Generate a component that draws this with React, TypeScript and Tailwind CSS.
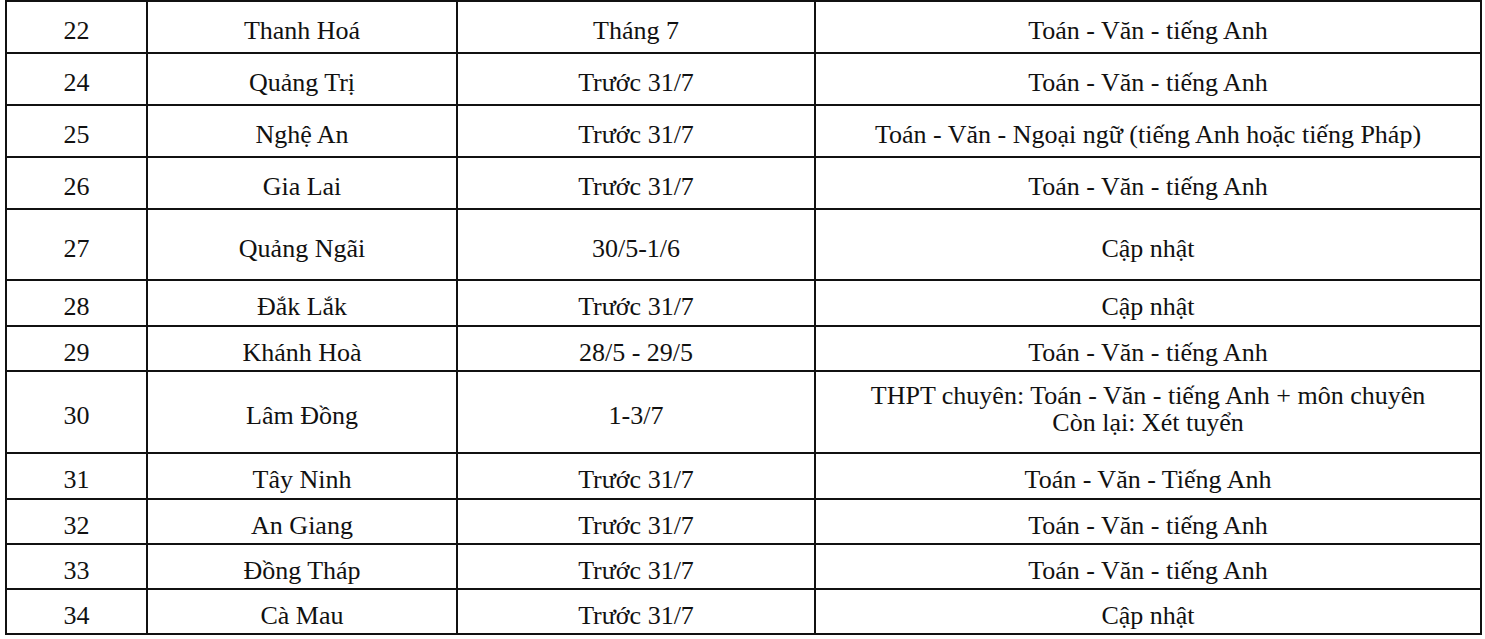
const rows: { no: string; name: string; time: string; subjects: string[]; h: string }[] = [
  { no: "22", name: "Thanh Hoá", time: "Tháng 7", subjects: ["Toán - Văn - tiếng Anh"], h: "h-[52px]" },
  { no: "24", name: "Quảng Trị", time: "Trước 31/7", subjects: ["Toán - Văn - tiếng Anh"], h: "h-[52px]" },
  { no: "25", name: "Nghệ An", time: "Trước 31/7", subjects: ["Toán - Văn - Ngoại ngữ (tiếng Anh hoặc tiếng Pháp)"], h: "h-[52px]" },
  { no: "26", name: "Gia Lai", time: "Trước 31/7", subjects: ["Toán - Văn - tiếng Anh"], h: "h-[52px]" },
  { no: "27", name: "Quảng Ngãi", time: "30/5-1/6", subjects: ["Cập nhật"], h: "h-[71px]" },
  { no: "28", name: "Đắk Lắk", time: "Trước 31/7", subjects: ["Cập nhật"], h: "h-[46px]" },
  { no: "29", name: "Khánh Hoà", time: "28/5 - 29/5", subjects: ["Toán - Văn - tiếng Anh"], h: "h-[45px]" },
  {
    no: "30",
    name: "Lâm Đồng",
    time: "1-3/7",
    subjects: ["THPT chuyên: Toán - Văn - tiếng Anh + môn chuyên", "Còn lại: Xét tuyển"],
    h: "h-[82px]",
  },
  { no: "31", name: "Tây Ninh", time: "Trước 31/7", subjects: ["Toán - Văn - Tiếng Anh"], h: "h-[46px]" },
  { no: "32", name: "An Giang", time: "Trước 31/7", subjects: ["Toán - Văn - tiếng Anh"], h: "h-[45px]" },
  { no: "33", name: "Đồng Tháp", time: "Trước 31/7", subjects: ["Toán - Văn - tiếng Anh"], h: "h-[45px]" },
  { no: "34", name: "Cà Mau", time: "Trước 31/7", subjects: ["Cập nhật"], h: "h-[43px]" },
];

export default function App() {
  return (
    <div className="h-[639px] w-[1485px] bg-white pl-[5px] [font-family:'Liberation_Serif','Times_New_Roman',serif] text-[26px] leading-[28px] text-[#111]">
      <div className="flex w-[1477px] flex-col border-2 border-[#111]">
        {rows.map((r, i) => (
          <div
            key={r.no}
            className={`flex ${r.h} ${i < rows.length - 1 ? "border-b-2 border-[#111]" : ""}`}
          >
            <div className="flex w-[141px] shrink-0 items-center justify-center border-r-2 border-[#111] pt-[8px]">
              {r.no}
            </div>
            <div className="flex w-[310px] shrink-0 items-center justify-center border-r-2 border-[#111] pt-[8px]">
              {r.name}
            </div>
            <div className="flex w-[358px] shrink-0 items-center justify-center border-r-2 border-[#111] pt-[8px]">
              {r.time}
            </div>
            {r.subjects.length > 1 ? (
              <div className="flex flex-1 flex-col items-center justify-center pb-[6px] text-center leading-[27px]">
                {r.subjects.map((s) => (
                  <span key={s}>{s}</span>
                ))}
              </div>
            ) : (
              <div className="flex flex-1 items-center justify-center pt-[8px] text-center">
                {r.subjects[0]}
              </div>
            )}
          </div>
        ))}
      </div>
    </div>
  );
}
